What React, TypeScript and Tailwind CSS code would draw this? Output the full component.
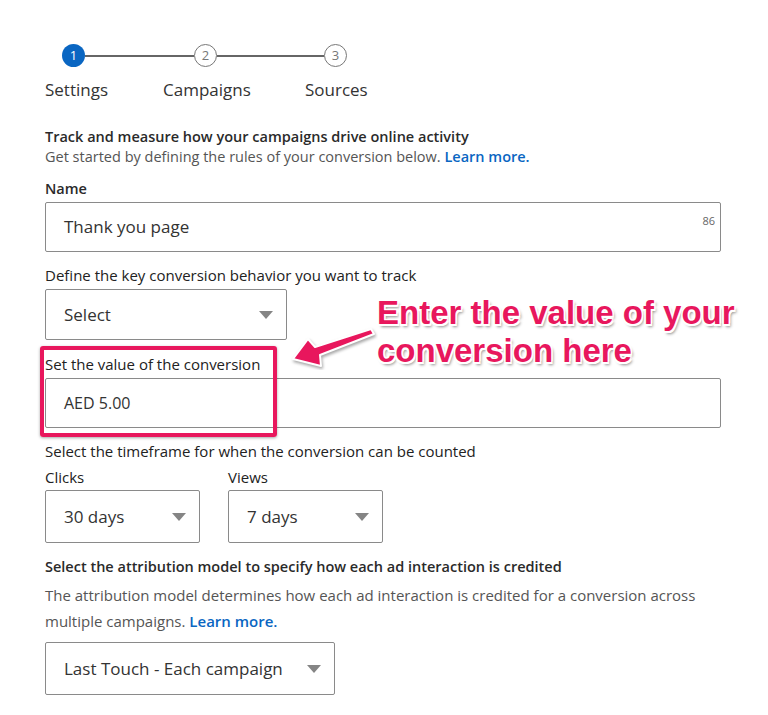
import React from 'react';

const font = { fontFamily: '"Open Sans", "Noto Sans", Arial, sans-serif' };

function Caret() {
    return (
        <svg width="14" height="8" viewBox="0 0 14 8" className="shrink-0">
            <path d="M0 0 L14 0 L7 8 Z" fill="#858585" />
        </svg>
    );
}

function SelectBox({ label, className }: { label: string; className: string }) {
    return (
        <div className={`flex items-center justify-between border border-[#8a8a8a] rounded-[2px] pl-[18px] pr-[13px] ${className}`}>
            <span className="text-[17px] text-[#333]">{label}</span>
            <Caret />
        </div>
    );
}

function Step({ n, active }: { n: number; active?: boolean }) {
    return (
        <div
            className={`w-[23px] h-[23px] rounded-full flex items-center justify-center text-[13px] shrink-0 ${
                active ? 'bg-[#0a66c2] text-white' : 'border border-[#777] text-[#777]'
            }`}
        >
            {n}
        </div>
    );
}

export default function App() {
    return (
        <div className="relative w-[768px] h-[715px] bg-white overflow-hidden text-[#1d1d1d]" style={font}>
            <div className="pl-[45px] pt-[44px]">
                {/* stepper */}
                <div className="flex items-center pl-[17px]">
                    <Step n={1} active />
                    <div className="w-[109px] h-[2px] bg-[#666]" />
                    <Step n={2} />
                    <div className="w-[107px] h-[2px] bg-[#666]" />
                    <Step n={3} />
                </div>
                <div className="flex text-[17px] text-[#333] mt-[12px] leading-[22px]">
                    <span className="w-[118px]">Settings</span>
                    <span className="w-[142px]">Campaigns</span>
                    <span>Sources</span>
                </div>

                <div className="mt-[26px] text-[14.5px] leading-[20px]">
                    <p className="font-semibold text-[#2a2a2a]">Track and measure how your campaigns drive online activity</p>
                    <p className="text-[#555]">
                        Get started by defining the rules of your conversion below.{' '}
                        <span className="text-[#0a66c2] font-semibold">Learn more.</span>
                    </p>
                </div>

                <p className="mt-[12px] text-[14.5px] font-semibold leading-[20px] text-[#2a2a2a]">Name</p>
                <div className="relative mt-[3px] w-[676px] h-[50px] border border-[#8a8a8a] rounded-[2px] flex items-center pl-[18px]">
                    <span className="text-[17px] text-[#333]">Thank you page</span>
                    <span className="absolute right-[5px] top-[10px] text-[11px] text-[#666]">86</span>
                </div>

                <p className="mt-[13px] text-[15px] leading-[20px] text-[#222]">Define the key conversion behavior you want to track</p>
                <SelectBox label="Select" className="mt-[4px] w-[242px] h-[51px]" />

                <p className="mt-[14px] text-[15px] leading-[20px] text-[#222]">Set the value of the conversion</p>
                <div className="mt-[4px] w-[676px] h-[50px] border border-[#8a8a8a] rounded-[2px] flex items-center pl-[18px]">
                    <span className="text-[16px] text-[#333]">AED 5.00</span>
                </div>

                <p className="mt-[13px] text-[15px] leading-[20px] text-[#222]">Select the timeframe for when the conversion can be counted</p>
                <div className="flex gap-[28px] mt-[6px]">
                    <div>
                        <p className="text-[15px] leading-[20px] text-[#222]">Clicks</p>
                        <SelectBox label="30 days" className="mt-[3px] w-[155px] h-[53px]" />
                    </div>
                    <div>
                        <p className="text-[15px] leading-[20px] text-[#222]">Views</p>
                        <SelectBox label="7 days" className="mt-[3px] w-[155px] h-[53px]" />
                    </div>
                </div>

                <p className="mt-[14px] text-[14.5px] font-semibold leading-[20px] text-[#2a2a2a]">
                    Select the attribution model to specify how each ad interaction is credited
                </p>
                <p className="mt-[5px] text-[15px] leading-[26px] text-[#555] w-[660px]">
                    The attribution model determines how each ad interaction is credited for a conversion across multiple campaigns.{' '}
                    <span className="text-[#0a66c2] font-semibold">Learn more.</span>
                </p>
                <SelectBox label="Last Touch - Each campaign" className="mt-[8px] w-[290px] h-[53px]" />
            </div>

            {/* annotation: highlight box */}
            <div className="absolute left-[40px] top-[346px] w-[237px] h-[91px] border-[4px] border-[#e8175d] rounded-[3px] shadow-[0_1px_3px_rgba(0,0,0,0.35)]" />

            {/* annotation: arrow */}
            <svg className="absolute left-[286px] top-[324px]" width="92" height="46" viewBox="0 0 92 46">
                <path
                    d="M85 5 L88 10 L34 31 L35 42 L7 35 L22 15 L29 23 Z"
                    fill="#e8175d"
                    stroke="white"
                    strokeWidth="2"
                    strokeLinejoin="round"
                    style={{ filter: 'drop-shadow(1px 2px 1.5px rgba(0,0,0,0.35))' }}
                />
            </svg>

            {/* annotation: callout text */}
            <div
                className="absolute left-[377px] top-[294px] text-[#e8175d] text-[33px] font-bold leading-[38px] [text-shadow:-1.5px_-1.5px_0_#fff,1.5px_-1.5px_0_#fff,-1.5px_1.5px_0_#fff,1.5px_1.5px_0_#fff,0_2px_0_#fff,2px_3px_3px_rgba(0,0,0,0.45)]"
                style={{ fontFamily: '"Liberation Sans", Arial, sans-serif' }}
            >
                <div>Enter the value of your</div>
                <div>conversion here</div>
            </div>
        </div>
    );
}
